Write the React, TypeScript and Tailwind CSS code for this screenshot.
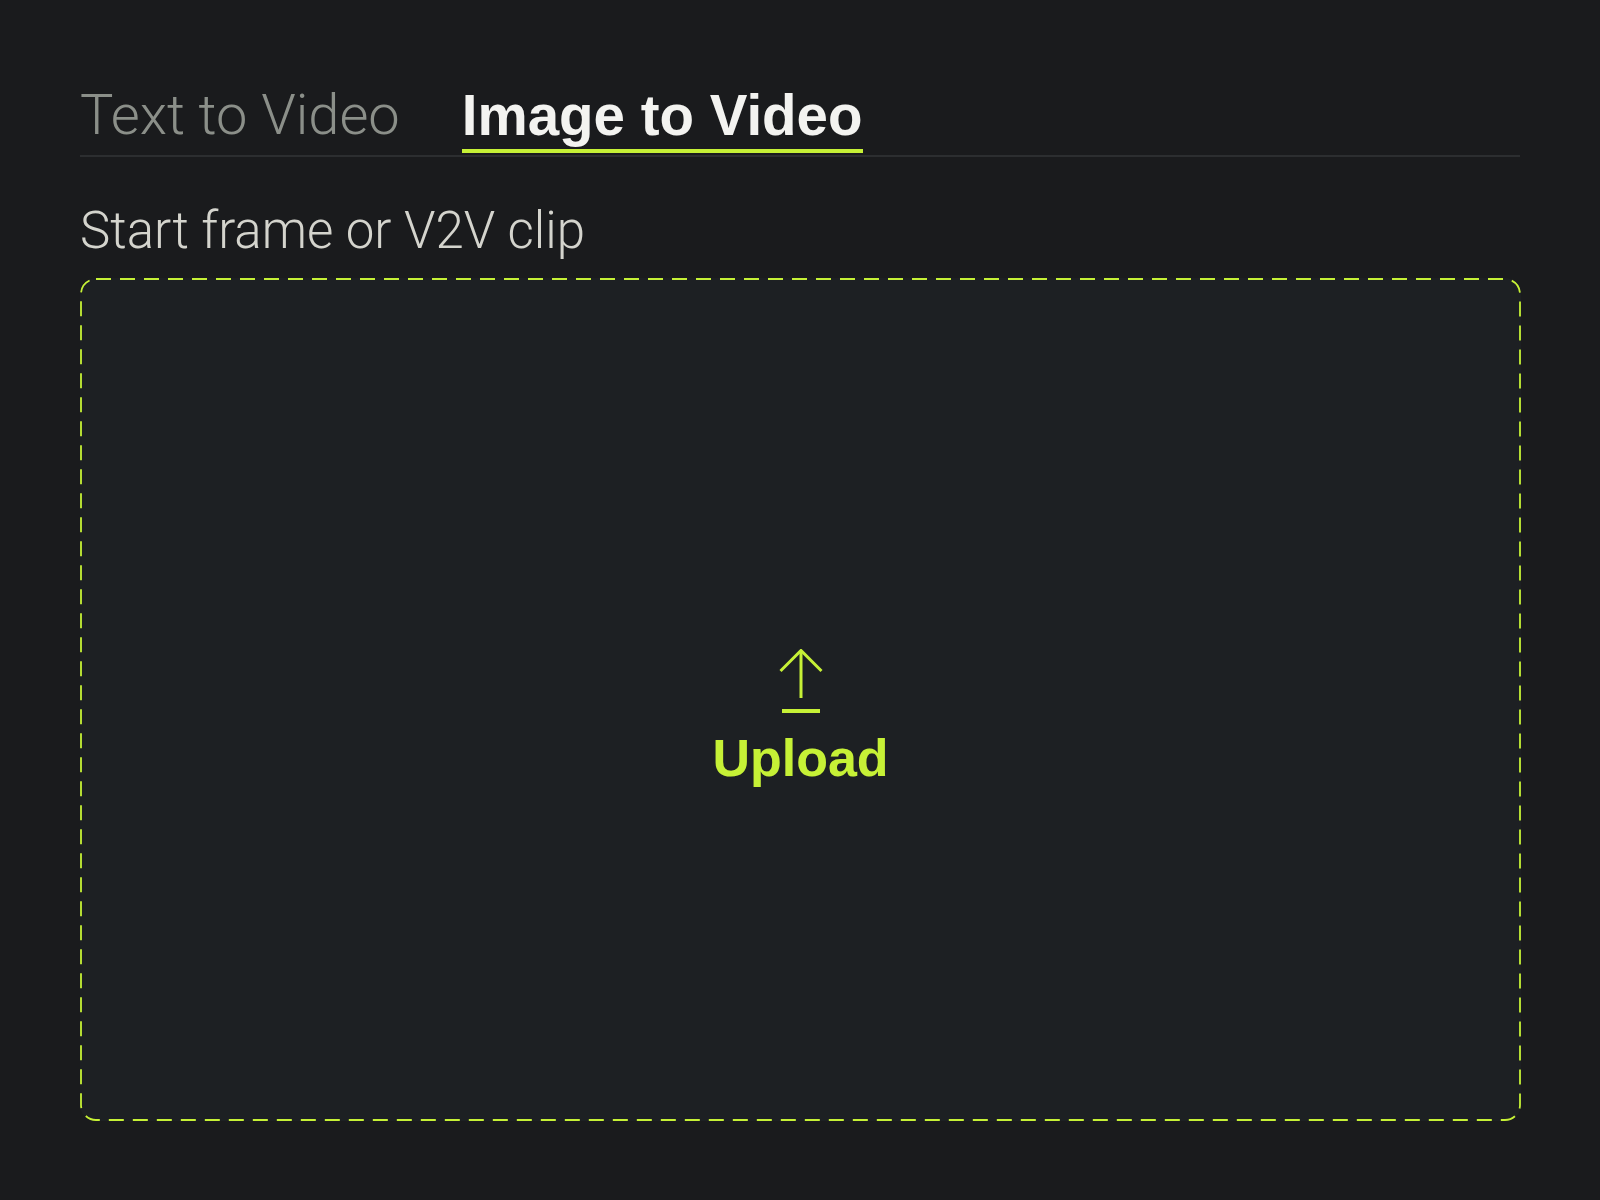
import React from "react";

const LIME = "#c6f136";
const LIGHT_FACE = 'Roboto, "Liberation Sans", Arial, sans-serif';

function UploadGlyph() {
  return (
    <svg width="44" height="66" viewBox="0 0 44 66" fill="none" stroke={LIME}>
      <path d="M1.5 22 L22 1.5 L42.5 22" strokeWidth="3" strokeLinejoin="miter" />
      <path d="M22 2 L22 49" strokeWidth="3" />
      <path d="M3 62 L41 62" strokeWidth="3.8" />
    </svg>
  );
}

function DropZone() {
  return (
    <div className="relative mt-[22px] h-[843px] w-[1441px] rounded-[16px] bg-[#1d2023]">
      <svg className="pointer-events-none absolute inset-0" width="1441" height="843">
        <rect
          x="1"
          y="1"
          width="1439"
          height="841"
          rx="15"
          ry="15"
          fill="none"
          stroke={LIME}
          strokeWidth="1.8"
          strokeDasharray="15 9"
        />
      </svg>
      <div className="flex h-full flex-col items-center justify-center pt-[33px]">
        <UploadGlyph />
        <div className="mt-[18px] text-[52px] font-bold leading-[51px] text-[#c6f136]">
          Upload
        </div>
      </div>
    </div>
  );
}

export default function App() {
  return (
    <div
      className="min-h-[1200px] w-[1600px] bg-[#1a1b1d] px-[80px] pt-[88px]"
      style={{ fontFamily: '"Liberation Sans", Arial, sans-serif' }}
    >
      <div className="flex w-[1440px] items-end border-b-2 border-[#2c2e30] pb-[2px]">
        <div
          className="pb-[10px] text-[56px] font-light leading-[55px] text-[#8b8f89]"
          style={{ fontFamily: LIGHT_FACE }}
        >
          Text to Video
        </div>
        <div className="ml-[62px] border-b-4 border-[#c6f136] pb-[6px] text-[56.5px] font-bold leading-[55px] text-[#f3f3f0]">
          Image to Video
        </div>
      </div>
      <div
        className="mt-[49px] text-[51px] font-light leading-[50px] text-[#d4d4cd]"
        style={{ fontFamily: LIGHT_FACE }}
      >
        Start frame or V2V clip
      </div>
      <DropZone />
    </div>
  );
}
